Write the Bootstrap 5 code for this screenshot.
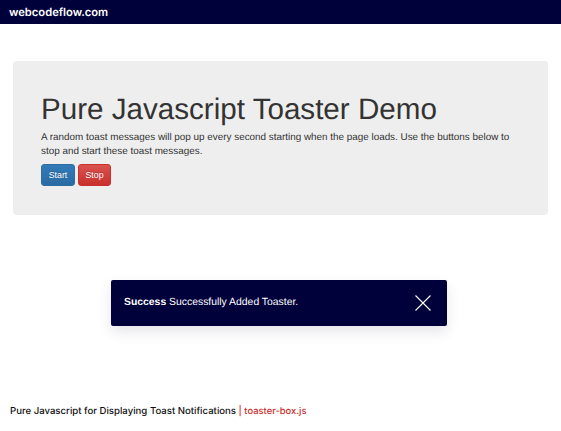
<!DOCTYPE html>
<html lang="en"><head><meta charset="utf-8"><title>Toaster</title>
<link href="https://cdn.jsdelivr.net/npm/bootstrap@5.3.0/dist/css/bootstrap.min.css" rel="stylesheet">
<style>
html,body{height:100%}
body{font-family:"Liberation Sans",Arial,sans-serif;color:#333;background:#fff;overflow:hidden;position:relative;text-rendering:geometricPrecision}
.topbar{height:24px;background:#00003a;color:#fff;font:600 11.2px/25px "Inter",sans-serif;padding-left:9px}
.hero{margin:37px 13px 0;height:154px;background:#eee;border-radius:4px;padding:29px 28px 0}
.hero h1{font:400 29.6px/40px "Liberation Sans",sans-serif;color:#333;margin:0 0 1px}
.hero p{font-size:9.9px;line-height:13.5px;margin:0 0 6px;color:#333}
.btnrow{display:flex;gap:3px}
.tbtn{font-size:8.8px;line-height:14px;padding:3px 0;width:34px;height:22px;border-radius:3px;color:#fff;border:1px solid transparent;text-shadow:0 -1px 0 rgba(0,0,0,.2)}
.tbtn-b{width:33px}
.tbtn-a{background:linear-gradient(#337ab7,#2b6ba3);border-color:#2e6da4}
.tbtn-b{background:linear-gradient(#d9534f,#c9302c);border-color:#c9302c}
.toastbox{position:absolute;left:111px;top:280px;width:336px;height:46px;background:#00003a;color:#fff;border-radius:2px;box-shadow:0 6px 14px rgba(0,0,58,.1);font:400 10.4px/46px "Liberation Sans",sans-serif;padding:0 16px 0 13px}
.foot{position:absolute;left:10px;top:405px;font:500 9.6px/14px "Inter",sans-serif;color:#111}
.foot a{color:#c9302c;text-decoration:none;font-size:9.4px}
</style></head><body>
<div class="topbar">webcodeflow.com</div>
<div class="hero">
<h1>Pure Javascript Toaster Demo</h1>
<p>A random toast messages will pop up every second starting when the page loads. Use the buttons below to stop and start these toast messages.</p>
<div class="btnrow"><button class="btn tbtn tbtn-a">Start</button><button class="btn tbtn tbtn-b">Stop</button></div>
</div>
<div class="toastbox d-flex justify-content-between align-items-center"><span><b>Success</b> Successfully Added Toaster.</span>
<svg width="16" height="16" viewBox="0 0 16 16"><path d="M.5.5l15 15M15.5.5l-15 15" stroke="#fff" stroke-width="1.1" fill="none"/></svg></div>
<div class="foot">Pure Javascript for Displaying Toast Notifications <a href="#">| toaster-box.js</a></div>
<script src="https://cdn.jsdelivr.net/npm/bootstrap@5.3.0/dist/js/bootstrap.bundle.min.js"></script>
</body></html>
